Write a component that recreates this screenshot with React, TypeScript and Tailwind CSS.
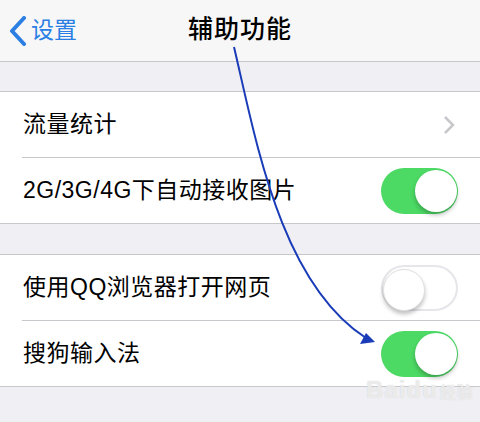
import React from "react";

const font = { fontFamily: '"Liberation Sans", "Noto Sans CJK SC", sans-serif' };

function Toggle({ on }: { on: boolean }) {
  return (
    <div
      className={`relative w-[77px] h-[46px] rounded-full ${
        on ? "bg-[#4cd964]" : "bg-white border-2 border-[#e5e5ea]"
      }`}
    >
      <div
        className={`absolute top-[2px] w-[42px] h-[42px] rounded-full bg-white shadow-[0_3px_4px_rgba(0,0,0,0.25)] ${
          on ? "right-[1px]" : "left-0 top-0 border border-[#e0e0e0]"
        }`}
      />
    </div>
  );
}

function Row({ label, children }: { label: string; children?: React.ReactNode }) {
  return (
    <div className="flex items-center justify-between h-[65px] pl-[23px] pr-[22px] bg-white">
      <span className="text-[23px] text-black tracking-[0.5px]">{label}</span>
      {children}
    </div>
  );
}

export default function App() {
  return (
    <div className="relative w-[480px] h-[422px] overflow-hidden bg-[#efeff4]" style={font}>
      {/* nav bar */}
      <header className="relative h-[62px] bg-[#f7f7f8] border-b border-[#c8c7cc] flex items-center">
        <div className="flex items-center pl-[9px] text-[#2b7fe3]">
          <svg width="18" height="30" viewBox="0 0 18 30">
            <path d="M15 2 L3 15 L15 28" fill="none" stroke="#2b7fe3" strokeWidth="4" strokeLinecap="round" strokeLinejoin="round" />
          </svg>
          <span className="ml-[4px] text-[23px] leading-none">设置</span>
        </div>
        <h1 className="absolute left-0 right-0 text-center text-[25px] font-medium text-black tracking-[1px] leading-none top-[17px]">
          辅助功能
        </h1>
      </header>

      <div className="h-[29px]" />

      <section className="border-y border-[#c8c7cc] bg-white">
        <Row label="流量统计">
          <svg width="12" height="20" viewBox="0 0 12 20" className="mr-[3px]">
            <path d="M2 2 L10 10 L2 18" fill="none" stroke="#c7c7cc" strokeWidth="2.5" />
          </svg>
        </Row>
        <div className="h-px ml-[22px] bg-[#c8c7cc]" />
        <Row label="2G/3G/4G下自动接收图片">
          <Toggle on />
        </Row>
      </section>

      <div className="h-[30px]" />

      <section className="border-y border-[#c8c7cc] bg-white">
        <Row label="使用QQ浏览器打开网页">
          <Toggle on={false} />
        </Row>
        <div className="h-px ml-[22px] bg-[#c8c7cc]" />
        <Row label="搜狗输入法">
          <Toggle on />
        </Row>
      </section>

      {/* watermark */}
      <div className="absolute left-[366px] top-[378px] text-[24px] font-bold text-white/60 leading-none tracking-[1px] [text-shadow:0_0_1px_#ccc]">
        Baidu<span className="text-[16px] ml-[2px]">经验</span>
      </div>

      {/* annotation arrow */}
      <svg className="absolute inset-0 pointer-events-none" width="480" height="422" viewBox="0 0 480 422">
        <path d="M234 47 C256 140 280 282 366 338" fill="none" stroke="#1a3cb8" strokeWidth="2" />
        <path d="M375 342 L360 344 L366 333 Z" fill="#1a3cb8" />
      </svg>
    </div>
  );
}
